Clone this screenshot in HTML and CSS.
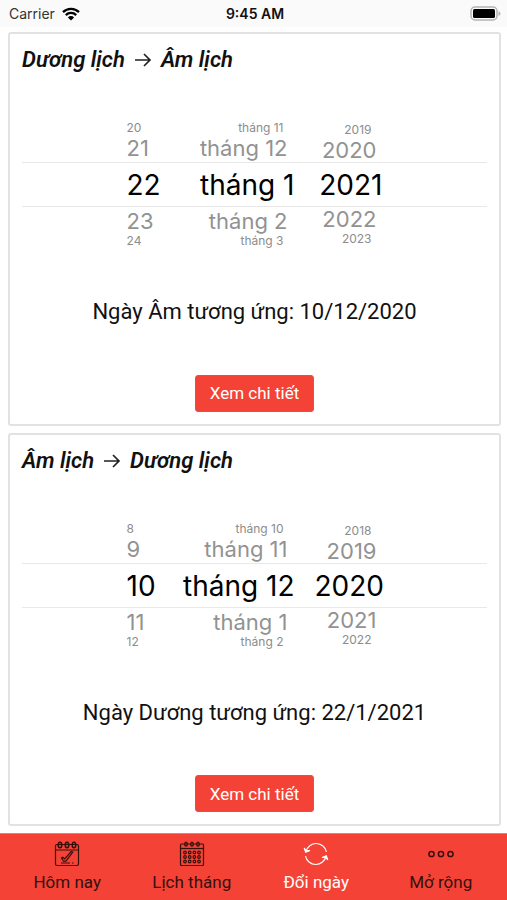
FILE: index.html
```html
<!DOCTYPE html>
<html lang="vi">
<head>
<meta charset="utf-8">
<meta name="viewport" content="width=device-width, initial-scale=1">
<title>Đổi ngày</title>
<link rel="stylesheet" href="styles.css">
</head>
<body>
<header class="status">
  <div class="carrier">Carrier
    <svg class="wifi" viewBox="0 0 18 14" aria-hidden="true"><path d="M1 5.2a11.5 11.5 0 0 1 16 0M3.8 8.1a7.4 7.4 0 0 1 10.4 0" fill="none" stroke="#000" stroke-width="2.3"/><path d="M9 13.6 5.9 10.4a4.4 4.4 0 0 1 6.2 0z"/></svg>
  </div>
  <div class="clock">9:45 AM</div>
  <svg class="battery" viewBox="0 0 31 15" aria-hidden="true"><rect x="1" y="1" width="26" height="13" rx="4" fill="#fafafa" stroke="#b4b4b4" stroke-width="1.5"/><rect x="3" y="3" width="22" height="9" rx="1.5"/><path d="M28.5 5v5q2-1 2-2.500T28.500 5z" fill="#b4b4b4"/></svg>
</header>
<main class="content">
  <section class="card">
    <h2 class="title">Dương lịch
      <svg class="arrow" viewBox="0 0 18 16" role="img" aria-label="sang"><path d="M1 8h15M10 2l6 6-6 6"/></svg>
      Âm lịch</h2>
    <div class="picker">
      <ul class="wheel day" aria-label="Ngày">
        <li class="far">20</li><li class="near">21</li><li class="selected">22</li><li class="near">23</li><li class="far">24</li>
      </ul>
      <ul class="wheel month" aria-label="Tháng">
        <li class="far">tháng 11</li><li class="near">tháng 12</li><li class="selected">tháng 1</li><li class="near">tháng 2</li><li class="far">tháng 3</li>
      </ul>
      <ul class="wheel year" aria-label="Năm">
        <li class="far">2019</li><li class="near">2020</li><li class="selected">2021</li><li class="near">2022</li><li class="far">2023</li>
      </ul>
    </div>
    <p class="result">Ngày Âm tương ứng: 10/12/2020</p>
    <button class="detail" type="button">Xem chi tiết</button>
  </section>
  <section class="card">
    <h2 class="title">Âm lịch
      <svg class="arrow" viewBox="0 0 18 16" role="img" aria-label="sang"><path d="M1 8h15M10 2l6 6-6 6"/></svg>
      Dương lịch</h2>
    <div class="picker">
      <ul class="wheel day" aria-label="Ngày">
        <li class="far">8</li><li class="near">9</li><li class="selected">10</li><li class="near">11</li><li class="far">12</li>
      </ul>
      <ul class="wheel month" aria-label="Tháng">
        <li class="far">tháng 10</li><li class="near">tháng 11</li><li class="selected">tháng 12</li><li class="near">tháng 1</li><li class="far">tháng 2</li>
      </ul>
      <ul class="wheel year" aria-label="Năm">
        <li class="far">2018</li><li class="near">2019</li><li class="selected">2020</li><li class="near">2021</li><li class="far">2022</li>
      </ul>
    </div>
    <p class="result">Ngày Dương tương ứng: 22/1/2021</p>
    <button class="detail" type="button">Xem chi tiết</button>
  </section>
</main>
<nav class="tabs">
  <a class="tab" href="#today">
    <svg viewBox="0 0 26 26" aria-hidden="true"><rect x="1.500" y="3.500" width="23" height="21" rx="1.500"/><path d="M1.500 9h23M16 22H7M18 22h1.500"/><path d="M7.500 17l1.200-.8 2 1.800 6.500-7.500 1.600.5-6.800 9.200H9.500z"/><g stroke-width="1.500"><ellipse cx="6" cy="4" rx="1.800" ry="2.800"/><ellipse cx="13" cy="4" rx="1.800" ry="2.800"/><ellipse cx="20" cy="4" rx="1.800" ry="2.800"/></g></svg>
    Hôm nay</a>
  <a class="tab" href="#month">
    <svg viewBox="0 0 26 26" aria-hidden="true"><rect x="1.500" y="3" width="23" height="21.500" rx="1"/><path d="M1.500 7.500h23"/><g stroke-width="1.300"><ellipse cx="7" cy="3.200" rx="1.300" ry="2"/><ellipse cx="13" cy="3.200" rx="1.300" ry="2"/><ellipse cx="19" cy="3.200" rx="1.300" ry="2"/></g><g><circle cx="6" cy="11.500" r="1.300"/><circle cx="10.700" cy="11.500" r="1.300"/><circle cx="15.400" cy="11.500" r="1.300"/><circle cx="20" cy="11.500" r="1.300"/><circle cx="6" cy="16" r="1.300"/><circle cx="10.700" cy="16" r="1.300"/><circle cx="15.400" cy="16" r="1.300"/><circle cx="20" cy="16" r="1.300"/><circle cx="6" cy="20.500" r="1.300"/><circle cx="10.700" cy="20.500" r="1.300"/><circle cx="15.400" cy="20.500" r="1.300"/><circle cx="20" cy="20.500" r="1.300"/></g></svg>
    Lịch tháng</a>
  <a class="tab active" href="#convert" aria-current="page">
    <svg viewBox="0 0 26 26" aria-hidden="true"><path d="M3 10.500A10.500 10.500 0 0 1 23.500 11M23 15.500A10.500 10.500 0 0 1 2.500 15"/><path d="M1.200 7l1.500 4.200L7 9.500l-4 .2zM24.800 19l-1.500-4.200L19 16.500l4-.2z" fill="currentColor"/></svg>
    Đổi ngày</a>
  <a class="tab" href="#more">
    <svg viewBox="0 0 26 26" aria-hidden="true"><g stroke-width="1.500"><circle cx="3.500" cy="13" r="2.600"/><circle cx="13" cy="13" r="2.600"/><circle cx="22.500" cy="13" r="2.600"/></g></svg>
    Mở rộng</a>
</nav>
</body>
</html>
```
FILE: styles.css
```css
* { box-sizing: border-box; }

body {
  margin: 0;
  min-height: 100vh;
  display: flex;
  flex-direction: column;
  background: #fff;
  color: #111;
  font-family: Roboto, "Noto Sans", sans-serif;
}

.status {
  display: grid;
  grid-template-columns: 1fr auto 1fr;
  align-items: center;
  height: 27px;
  padding: 0 6px 0 9px;
  background: #fafafa;
  font-family: Inter, "Noto Sans", sans-serif;
  font-size: 14px;
}
.carrier { display: flex; align-items: center; gap: 7px; color: #333; }
.wifi { width: 18px; height: 14px; }
.clock { font-weight: 600; }
.battery { width: 31px; height: 15px; justify-self: end; }

.content {
  flex: 1;
  display: flex;
  flex-direction: column;
  gap: 7px;
  padding: 5px 6px 7px 8px;
}

.card {
  flex: 1;
  display: flex;
  flex-direction: column;
  align-items: center;
  padding: 12px 12px;
  border: 2px solid #e2e2e2;
  border-radius: 3px;
}

.title {
  align-self: stretch;
  display: flex;
  align-items: center;
  gap: 9px;
  margin: 0;
  font-size: 22px;
  line-height: 28px;
  font-weight: 600;
  font-style: italic;
}
.arrow { width: 18px; height: 16px; fill: none; stroke: #222; stroke-width: 1.7; }

.picker {
  position: relative;
  align-self: stretch;
  display: grid;
  grid-template-columns: 32px 116px 68px;
  justify-content: center;
  gap: 20px;
  margin-top: 48px;
  font-family: Inter, "Noto Sans", sans-serif;
}
.picker::before {
  content: "";
  position: absolute;
  inset: 40px 0;
  border: solid #e8e8e8;
  border-width: 1px 0;
}
.wheel {
  list-style: none;
  margin: 0;
  padding: 0;
  white-space: nowrap;
}
.month, .year { text-align: right; }
.selected { height: 45px; font-size: 28px; line-height: 47px; color: #000; }
.near { font-size: 22px; line-height: 28px; color: #929292; }
.far { font-size: 12px; line-height: 12px; color: #8c8c8c; }
.month .near { padding-right: 7px; }
.month .far { padding-right: 11px; }
.year .near { padding-right: 6px; line-height: 24px; }
.year .far { padding-right: 11px; line-height: 16px; }

.result {
  margin: 51px 0 0;
  font-size: 22px;
  line-height: 28px;
}

.detail {
  margin-top: auto;
  height: 37px;
  padding: 0 14px;
  border: 1px solid #d4574c;
  border-radius: 3px;
  background: #f44336;
  color: #fff;
  font: 17px/24px Roboto, "Noto Sans", sans-serif;
}

.tabs {
  display: grid;
  grid-template-columns: repeat(4, 1fr);
  height: 67px;
  padding: 0 4px 0 5px;
  border-top: 1px solid #d8847c;
  background: #f44336;
}
.tab {
  display: flex;
  flex-direction: column;
  align-items: center;
  gap: 3px;
  padding-top: 7px;
  color: #35100d;
  font-size: 17px;
  line-height: 24px;
  text-decoration: none;
}
.tab svg { width: 26px; height: 26px; fill: none; stroke: currentColor; stroke-width: 1.2; }
.active { color: #fff; }
```
